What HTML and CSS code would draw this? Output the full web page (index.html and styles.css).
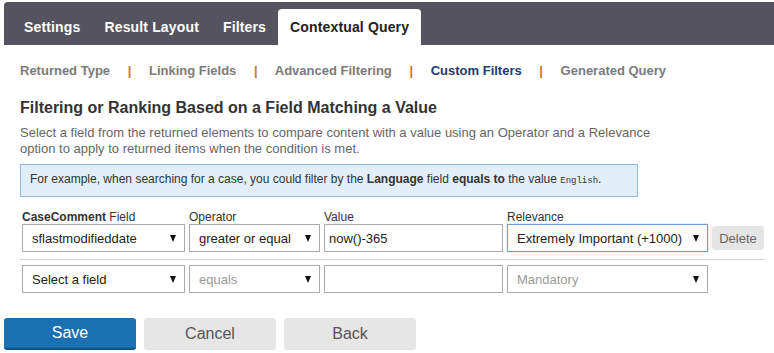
FILE: index.html
```html
<!DOCTYPE html>
<html lang="en">
<head>
    <meta charset="UTF-8">
    <meta name="viewport" content="width=device-width, initial-scale=1.0">
    <title>Contextual Query</title>
    <link rel="stylesheet" href="styles.css">
</head>
<body>
    <div class="page">
        <div class="tabs">
            <div class="tab">Settings</div>
            <div class="tab">Result Layout</div>
            <div class="tab">Filters</div>
            <div class="tab active">Contextual Query</div>
        </div>
        <div class="content">
            <div class="subnav">
                <span class="step">Returned Type</span>
                <span class="sep">|</span>
                <span class="step">Linking Fields</span>
                <span class="sep">|</span>
                <span class="step">Advanced Filtering</span>
                <span class="sep">|</span>
                <span class="step current">Custom Filters</span>
                <span class="sep">|</span>
                <span class="step">Generated Query</span>
            </div>
            <h2>Filtering or Ranking Based on a Field Matching a Value</h2>
            <p class="desc">Select a field from the returned elements to compare content with a value using an Operator and a Relevance option to apply to returned items when the condition is met.</p>
            <div class="info">For example, when searching for a case, you could filter by the <b>Language</b> field <b>equals to</b> the value <code>English</code>.</div>
            <div class="filters">
                <div class="row labels">
                    <div><b>CaseComment</b> Field</div>
                    <div>Operator</div>
                    <div>Value</div>
                    <div>Relevance</div>
                    <div></div>
                </div>
                <div class="row first">
                    <div class="select"><span>sflastmodifieddate</span><i class="arrow"></i></div>
                    <div class="select"><span>greater or equal</span><i class="arrow"></i></div>
                    <input class="value" type="text" value="now()-365">
                    <div class="select focused"><span>Extremely Important (+1000)</span><i class="arrow"></i></div>
                    <button class="delete">Delete</button>
                </div>
                <div class="row">
                    <div class="select"><span>Select a field</span><i class="arrow"></i></div>
                    <div class="select disabled"><span>equals</span><i class="arrow"></i></div>
                    <input class="value" type="text" value="">
                    <div class="select disabled"><span>Mandatory</span><i class="arrow"></i></div>
                    <div></div>
                </div>
            </div>
        </div>
        <div class="actions">
            <button class="btn primary">Save</button>
            <button class="btn">Cancel</button>
            <button class="btn">Back</button>
        </div>
    </div>
</body>
</html>
```

FILE: styles.css
```css
body {
    margin: 0;
    font-family: "Liberation Sans", Arial, sans-serif;
    color: #333;
}
.page {
    padding: 2px 0 0 4px;
}
.tabs {
    display: flex;
    align-items: flex-end;
    height: 43px;
    padding-left: 8px;
    background: #55535f;
    border-top-left-radius: 4px;
}
.tab {
    height: 36px;
    line-height: 36px;
    padding: 0 12px;
    color: white;
    font-size: 14px;
    font-weight: bold;
    letter-spacing: 0.15px;
}
.tab.active {
    background: white;
    color: #222;
    border-radius: 4px 4px 0 0;
}
.content {
    padding: 0 9px 0 16px;
}
.subnav {
    margin-top: 18px;
    line-height: 16px;
    font-size: 13px;
    font-weight: bold;
    color: #7b7b7b;
}
.sep {
    color: #c8782a;
    margin: 0 14px;
}
.current {
    color: #233a72;
}
h2 {
    margin: 19px 0 0;
    font-size: 16px;
    line-height: 20px;
    color: #333;
}
.desc {
    margin: 7px 0 0;
    font-size: 13px;
    line-height: 16px;
    color: #666;
    width: 650px;
}
.info {
    margin-top: 7px;
    width: 618px;
    box-sizing: border-box;
    padding: 7px 9px;
    font-size: 12px;
    line-height: 15px;
    background: #e2eff9;
    border: 1px solid #92bbe3;
    color: #333;
}
.info code {
    font-family: "Liberation Mono", monospace;
    font-size: 9px;
}
.filters {
    margin-top: 13px;
}
.row {
    display: grid;
    grid-template-columns: 163px 131px 179px 201px 52px;
    column-gap: 4px;
    align-items: center;
    padding: 0 2px;
}
.labels {
    font-size: 12px;
    line-height: 14px;
}
.first {
    padding-bottom: 7px;
    border-bottom: 1px solid #d4d4d4;
    margin-bottom: 5px;
}
.select, .value {
    box-sizing: border-box;
    height: 28px;
    border: 1px solid #ababab;
    background: white;
    font-family: "Liberation Sans", Arial, sans-serif;
    font-size: 13px;
    color: #222;
}
.select {
    display: flex;
    align-items: center;
    justify-content: space-between;
    padding: 0 8px 0 9px;
}
.value {
    padding: 0 4px;
    margin: 0;
    outline: none;
}
.arrow {
    width: 0;
    height: 0;
    border-left: 3.5px solid transparent;
    border-right: 3.5px solid transparent;
    border-top: 7px solid #111;
}
.focused {
    border-color: #6aa4dc;
    box-shadow: 0 0 1px #6aa4dc;
}
.disabled span {
    color: #9a9a9a;
}
.delete {
    height: 24px;
    border: none;
    border-radius: 3px;
    background: #e5e5e5;
    color: #666;
    font-family: "Liberation Sans", Arial, sans-serif;
    font-size: 13px;
    padding: 0;
}
.actions {
    display: flex;
    gap: 8px;
    margin-top: 25px;
}
.btn {
    width: 132px;
    height: 32px;
    border: none;
    border-radius: 3px;
    background: #e6e6e6;
    color: #555;
    font-family: "Liberation Sans", Arial, sans-serif;
    font-size: 16px;
}
.btn.primary {
    background: #1b70b1;
    border-bottom: 2px solid #0e4f8c;
    color: white;
}
```
